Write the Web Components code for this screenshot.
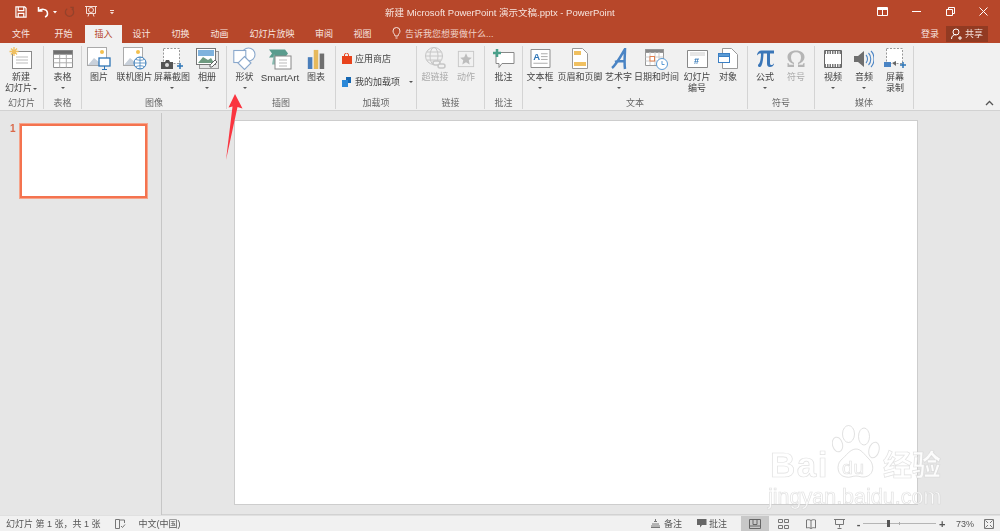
<!DOCTYPE html>
<html lang="zh">
<head>
<meta charset="utf-8">
<title>PowerPoint</title>
<style>
html, body { margin: 0; height: 100%; }
body {
    width: 1000px; height: 531px; overflow: hidden; position: relative;
    font: 9px "Noto Sans CJK SC", "Liberation Sans", sans-serif;
    display: flex; flex-direction: column;
    filter: blur(.3px);
}
</style>
</head>
<body>
<ppt-titlebar></ppt-titlebar>
<ppt-tabs></ppt-tabs>
<ppt-ribbon></ppt-ribbon>
<ppt-workspace></ppt-workspace>
<ppt-statusbar></ppt-statusbar>
<ppt-arrow></ppt-arrow>
<ppt-watermark></ppt-watermark>

<script>
const FONT = `"Liberation Sans", "Noto Sans CJK SC", sans-serif`;

customElements.define('ppt-titlebar', class extends HTMLElement {
    constructor() {
        super();
        this.attachShadow({mode: 'open'}).innerHTML = `
        <style>
        :host { display: flex; align-items: center; height: 25px; box-sizing: border-box; padding-bottom: 2px; background: #b7472a; color: #f6e4de; font: 9.5px ${FONT}; flex: none; position: relative; }
        .qat { display: flex; align-items: center; padding-left: 15px; gap: 0; width: 385px; box-sizing: border-box; }
        .title { width: 229px; white-space: nowrap; text-align: center; }
        .win { margin-left: auto; display: flex; align-items: center; }
        svg { display: block; }
        </style>
        <div class="qat">
            <svg width="12" height="12" viewBox="0 0 13 13" fill="none" stroke="#fff" stroke-width="1.300"><path d="M1 1h9.500L12 2.500V12H1zM3.500 1v4h6V1M3.500 12V8h6v4"/></svg>
            <svg style="margin-left:10px" width="12" height="12" viewBox="0 0 12 12" fill="none" stroke="#fff" stroke-width="1.500"><path d="M1.500 1v4h4M1.800 5C4 2.500 10 2.500 10.500 7c.2 2-1 3.500-2.500 4"/></svg>
            <svg style="margin-left:3px" width="6" height="4" viewBox="0 0 6 4" fill="#fff"><path d="M1 1h4L3 3.500z"/></svg>
            <svg style="margin-left:6px" width="11" height="12" viewBox="0 0 12 12" fill="none" stroke="#94422b" stroke-width="1.400"><path d="M3.500 2.500a4.500 4.500 0 1 0 5 0M7 1h3v3"/></svg>
            <svg style="margin-left:9px" width="14" height="13" viewBox="0 0 14 13" fill="none" stroke="#f4ddd6" stroke-width="1"><path d="M1 1.500h12M2.500 1.500v7h9v-7M5 8.500l-1 3M9 8.500l1 3"/><circle cx="7" cy="5" r="2.500"/></svg>
            <svg style="margin-left:11px" width="6" height="6" viewBox="0 0 6 6" fill="#f4ddd6"><path d="M1 1h4v1H1zM1 3h4L3 5.300z"/></svg>
        </div>
        <div class="title">新建 Microsoft PowerPoint 演示文稿.pptx - PowerPoint</div>
        <div class="win">
            <svg style="margin-right:24px" width="11" height="9" viewBox="0 0 11 9" fill="none" stroke="#fff"><path d="M.5.500h10v8H.5z"/><path d="M1 1h9v2H1z" fill="#fff" stroke="none"/><path d="M5.500 3v5"/></svg>
            <svg style="margin-right:25px" width="9" height="9" viewBox="0 0 9 9" fill="none" stroke="#fff"><path d="M0 4.500h9"/></svg>
            <svg style="margin-right:24px" width="9" height="9" viewBox="0 0 9 9" fill="none" stroke="#fff"><path d="M.5 2.500h6v6h-6zM2.500 2.500v-2h6v6h-2"/></svg>
            <svg style="margin-right:12px" width="9" height="9" viewBox="0 0 9 9" fill="none" stroke="#fff"><path d="M.5.500l8 8M8.500.500l-8 8"/></svg>
        </div>`;
    }
});

customElements.define('ppt-tabs', class extends HTMLElement {
    constructor() {
        super();
        const tabs = [['文件',42,0],['开始',43,0],['插入',37,1],['设计',39,0],['切换',39,0],['动画',39,0],['幻灯片放映',66,0],['审阅',38,0],['视图',39,0]];
        this.attachShadow({mode: 'open'}).innerHTML = `
        <style>
        :host { display: flex; height: 18px; background: #b7472a; color: #f8e6e0; font: 9px ${FONT}; flex: none; }
        .t { display: flex; align-items: center; justify-content: center; flex: none; box-sizing: border-box; padding-bottom: 2px; }
        .t.on { background: #f1f1f1; color: #b7472a; }
        .tell { display: flex; align-items: center; gap: 4px; margin-left: 10px; padding-bottom: 2px; color: #f0d2c8; }
        .right { margin-left: auto; display: flex; align-items: center; }
        .share { background: #923a22; width: 42px; height: 16px; margin: 0 12px 1px 7px; display: flex; align-items: center; justify-content: center; gap: 3px; color: #f6e4de; }
        .login { margin-bottom: 1px; }
        </style>
        ${tabs.map(([t, w, on]) => `<div class="t ${on ? 'on' : ''}" style="width:${w}px">${t}</div>`).join('')}
        <div class="tell">
            <svg width="9" height="12" viewBox="0 0 9 12" fill="none" stroke="#f6e4de"><path d="M3 9C3 7 1 6.500 1 4a3.500 3.500 0 0 1 7 0C8 6.500 6 7 6 9zM3.500 11h2"/></svg>
            <span>告诉我您想要做什么...</span>
        </div>
        <div class="right">
            <span class="login">登录</span>
            <div class="share">
                <svg width="11" height="12" viewBox="0 0 11 12" fill="none" stroke="#fff"><circle cx="5" cy="4" r="3"/><path d="M.5 11c0-3 2-4.500 4.500-4.500M7 10h4M9 8v4"/></svg>
                <span>共享</span>
            </div>
        </div>`;
    }
});

// one big ribbon button: icon on top, label under it, optional dropdown caret
customElements.define('rb-btn', class extends HTMLElement {
    constructor() {
        super();
        this.attachShadow({mode: 'open'}).innerHTML = `
        <style>
        :host { display: flex; flex-direction: column; align-items: center; flex: none; color: #444; font-size: 9px; line-height: 11px; white-space: nowrap; }
        :host([dim]) { color: #aaa; }
        .ic { height: 23px; margin-top: 1px; margin-bottom: 2px; display: flex; align-items: center; justify-content: center; }
        .caret { width: 0; height: 0; border: 2px solid transparent; border-top: 2.500px solid #555; border-bottom: 0; margin-top: 4px; }
        .lb { text-align: center; }
        </style>
        <div class="ic"><slot name="icon"></slot></div>
        <div class="lb"><slot></slot></div>
        <div class="caret"></div>`;
    }
    connectedCallback() {
        this.style.width = this.getAttribute('w') + 'px';
        if (!this.hasAttribute('caret'))
            this.shadowRoot.querySelector('.caret').style.display = 'none';
    }
});

// ribbon group: buttons on top, caption at the bottom, separator on the right
customElements.define('rb-group', class extends HTMLElement {
    constructor() {
        super();
        this.attachShadow({mode: 'open'}).innerHTML = `
        <style>
        :host { display: flex; flex-direction: column; flex: none; box-sizing: border-box; height: 63px; border-right: 1px solid #d4d4d4; color: #666; font-size: 9px; }
        .items { flex: 1; display: flex; min-height: 0; }
        .cap { height: 11px; line-height: 11px; text-align: center; }
        </style>
        <div class="items"><slot></slot></div>
        <div class="cap"></div>`;
    }
    connectedCallback() {
        this.shadowRoot.querySelector('.cap').textContent = this.getAttribute('label');
        this.style.width = this.getAttribute('w') + 'px';
    }
});

customElements.define('ppt-ribbon', class extends HTMLElement {
    constructor() {
        super();
        this.attachShadow({mode: 'open'}).innerHTML = `
        <style>
        :host { display: flex; height: 68px; box-sizing: border-box; padding-top: 3px; background: #f1f1f1; border-bottom: 1px solid #d2d2d2; flex: none; font-family: ${FONT}; position: relative; }
        svg { display: block; }
        .col { display: flex; flex-direction: column; gap: 11px; padding: 7px 0 0 5px; color: #444; line-height: 12px; font-size: 9px; }
        .row { display: flex; align-items: center; gap: 2px; white-space: nowrap; }
        .mini { width: 0; height: 0; border: 2px solid transparent; border-top: 2.500px solid #555; border-bottom: 0; margin-left: 7px; }
        .inl { display: inline-block; width: 0; height: 0; border: 2px solid transparent; border-top: 2.500px solid #555; border-bottom: 0; vertical-align: 1px; margin-left: 1px; }
        .up { position: absolute; right: 6px; bottom: 4px; }
        .sa { font-size: 9.800px; }
        </style>
        <rb-group w="44" label="幻灯片">
            <rb-btn w="42">
                <svg slot="icon" width="24" height="23" viewBox="0 0 24 23" fill="none"><rect x="3.500" y="4.500" width="19" height="17" fill="#fff" stroke="#8a8a8a"/><path d="M7 10h12M7 13h12M7 16h12" stroke="#bbb"/><path d="M5 0v9M.5 4.500h9M2 1.500l6 6M8 1.500l-6 6" stroke="#f0c060" stroke-width="1.300"/></svg>
                新建<br>幻灯片<i class="inl"></i>
            </rb-btn>
        </rb-group>
        <rb-group w="38" label="表格">
            <rb-btn w="37" caret>
                <svg slot="icon" width="20" height="18" viewBox="0 0 21 19" fill="#fff" stroke="#888"><path d="M.5.500h20v18H.5z"/><path d="M.5.500h20v4H.5z" fill="#6d6d6d"/><path d="M.5 9h20M.5 13.500h20M7 4.500v14M14 4.500v14" stroke="#aaa"/></svg>
                表格
            </rb-btn>
        </rb-group>
        <rb-group w="145" label="图像">
            <rb-btn w="34">
                <svg slot="icon" width="24" height="23" viewBox="0 0 24 23" fill="none"><rect x=".5" y=".5" width="19" height="18" fill="#fff" stroke="#aaa"/><path d="M1 18l6-7 5 4 3-2 4 5z" fill="#c8d0da"/><circle cx="15" cy="5" r="2" fill="#f3c04e"/><rect x="12" y="11" width="11" height="8" fill="#fff" stroke="#2e75b6" stroke-width="1.300"/><path d="M17.500 19v3M15 22.500h5" stroke="#2e75b6"/></svg>
                图片
            </rb-btn>
            <rb-btn w="37">
                <svg slot="icon" width="24" height="23" viewBox="0 0 24 23" fill="none"><rect x=".5" y=".5" width="19" height="18" fill="#fff" stroke="#aaa"/><path d="M1 18l6-7 5 4 3-2 4 5z" fill="#c8d0da"/><circle cx="15" cy="5" r="2" fill="#f3c04e"/><circle cx="17" cy="16" r="6" fill="#fff" stroke="#2e75b6"/><path d="M11 16h12M17 10v12M13 12.500c3 1 6 1 8 0M13 19.500c3-1 6-1 8 0" stroke="#2e75b6" stroke-width=".7"/></svg>
                联机图片
            </rb-btn>
            <rb-btn w="38" caret>
                <svg slot="icon" width="24" height="22" viewBox="0 0 24 22" fill="none"><rect x="3.500" y=".5" width="16" height="15" fill="#fff" stroke="#999" stroke-dasharray="2 1.500"/><path d="M1 14h4l1-2h3l1 2h3v7H1z" fill="#555"/><circle cx="7" cy="17" r="2" fill="#ddd"/><path d="M17 18h6M20 15v6" stroke="#2e75b6" stroke-width="1.500"/></svg>
                屏幕截图
            </rb-btn>
            <rb-btn w="32" caret>
                <svg slot="icon" width="23" height="21" viewBox="0 0 23 21" fill="none"><rect x="3.500" y="3.500" width="19" height="17" fill="#e6e6e6" stroke="#999"/><rect x=".5" y=".5" width="19" height="16" fill="#fff" stroke="#777"/><rect x="2" y="2" width="16" height="6" fill="#7fb2dd"/><path d="M2 15l5-6 5 3 3-2 3 5z" fill="#6f9a80"/><path d="M14 17l5-5 2 2-5 5h-2z" fill="#fff" stroke="#666"/></svg>
                相册
            </rb-btn>
        </rb-group>
        <rb-group w="109" label="插图">
            <rb-btn w="35" caret>
                <svg slot="icon" width="23" height="23" viewBox="0 0 23 23" fill="#fff" stroke="#8aa8cc" stroke-width="1.100"><circle cx="15.500" cy="7.500" r="6.500"/><rect x=".8" y="3.500" width="12" height="12" fill="#fff"/><path d="M11.500 9.500l6.500 6.500-6.500 6.500-6.500-6.500z"/></svg>
                形状
            </rb-btn>
            <rb-btn w="36">
                <svg slot="icon" width="24" height="22" viewBox="0 0 24 22" fill="none"><path d="M1 .5h16l3 4-3 4H1l3-4z" fill="#5a9c8e" transform="translate(0 1)"/><path d="M6 5.500l-2 11h5" fill="#8abcb2"/><rect x="7" y="8" width="16" height="13" fill="#fff" stroke="#888"/><path d="M11 12h8M11 15h8M11 18h8" stroke="#bbb"/></svg>
                <span class="sa">SmartArt</span>
            </rb-btn>
            <rb-btn w="36">
                <svg slot="icon" width="18" height="20" viewBox="0 0 18 22"><rect x="0" y="9" width="5" height="13" fill="#4a7ebb"/><rect x="6.500" y="1" width="5" height="21" fill="#e6b95c"/><rect x="13" y="5" width="5" height="17" fill="#6f6f6f"/></svg>
                图表
            </rb-btn>
        </rb-group>
        <rb-group w="81" label="加载项">
            <div class="col">
                <div class="row">
                    <svg width="12" height="12" viewBox="0 0 12 12"><path d="M1 3h10v8H1z" fill="#e8431c"/><path d="M3.500 4V2a2 2 0 0 1 4 0v2" fill="none" stroke="#e8431c"/></svg>
                    <span>应用商店</span>
                </div>
                <div class="row">
                    <svg width="12" height="12" viewBox="0 0 12 12" fill="#1667b2"><path d="M5 1h5v6H5z"/><path d="M1 4h6v7H1z" fill="#2b88d8"/></svg>
                    <span>我的加载项</span><i class="mini"></i>
                </div>
            </div>
        </rb-group>
        <rb-group w="68" label="链接">
            <rb-btn w="36" dim>
                <svg slot="icon" width="22" height="23" viewBox="0 0 22 23" fill="none" stroke="#c6c6c6"><circle cx="10" cy="9" r="8.500"/><ellipse cx="10" cy="9" rx="4" ry="8.500"/><path d="M1.500 9h17M2.500 5h15M2.500 13h15"/><rect x="9" y="14" width="7" height="4" rx="2" stroke-width="1.500" fill="#f1f1f1"/><rect x="14" y="17" width="7" height="4" rx="2" stroke-width="1.500" fill="#f1f1f1"/></svg>
                超链接
            </rb-btn>
            <rb-btn w="26" dim>
                <svg slot="icon" width="20" height="18" viewBox="0 0 20 20" fill="none"><rect x="1.500" y="1.500" width="17" height="17" stroke="#c6c6c6"/><path d="M10 3.500l2 4.500 4.500.5-3.400 3 1 4.500L10 13.500 5.900 16l1-4.500-3.400-3L8 8z" fill="#bdbdbd"/></svg>
                动作
            </rb-btn>
        </rb-group>
        <rb-group w="38" label="批注">
            <rb-btn w="37">
                <svg slot="icon" width="23" height="22" viewBox="0 0 23 20" fill="none"><path d="M4 3.500h18v11H10l-3 4v-4H4z" fill="#fff" stroke="#888"/><path d="M1 4h8M5 0v8" stroke="#4aa08a" stroke-width="2.500"/></svg>
                批注
            </rb-btn>
        </rb-group>
        <rb-group w="225" label="文本">
            <rb-btn w="34" caret>
                <svg slot="icon" width="21" height="19" viewBox="0 0 21 20" fill="#fff" stroke="#888"><path d="M.5.500h20v19H.5z"/><text x="3" y="12" font-size="10" font-weight="700" fill="#2e75b6" stroke="none" font-family="Liberation Sans">A</text><path d="M11 5h7M11 8h7M11 11h7M3 15h15" stroke="#aaa"/></svg>
                文本框
            </rb-btn>
            <rb-btn w="46">
                <svg slot="icon" width="16" height="21" viewBox="0 0 16 21" fill="#fff" stroke="#999"><path d="M.5.500h10l5 5v15H.5z"/><rect x="2" y="3" width="7" height="4" fill="#f0c060" stroke="none"/><rect x="2" y="14" width="12" height="4" fill="#f0c060" stroke="none"/></svg>
                页眉和页脚
            </rb-btn>
            <rb-btn w="31" caret>
                <svg slot="icon" width="16" height="22" viewBox="0 0 16 22" fill="none"><path d="M1 20C5 17 10 8 14 1c0 6-1 13 0 20M4 14c3-1 7-1 10-1" stroke="#4a84c4" stroke-width="2.500"/></svg>
                艺术字
            </rb-btn>
            <rb-btn w="45">
                <svg slot="icon" width="23" height="23" viewBox="0 0 23 23" fill="#fff" stroke="#999"><path d="M.5 2.500h18v16H.5z"/><path d="M.5 2.500h18v3H.5z" fill="#888"/><path d="M.5 10h18M.5 14h18M5 5v13M10 5v13M14 5v13" stroke="#ccc"/><rect x="5" y="9.500" width="4.500" height="4.500" stroke="#e08050"/><circle cx="17" cy="17" r="5.500" stroke="#5b9bd5"/><path d="M17 14v3.500h2.500" stroke="#5b9bd5"/></svg>
                日期和时间
            </rb-btn>
            <rb-btn w="36">
                <svg slot="icon" width="21" height="18" viewBox="0 0 21 18" fill="#fff" stroke="#888"><path d="M.5.500h20v17H.5z"/><path d="M3 3h15M3 5h15" stroke="#ccc"/><text x="7" y="14" font-size="9" font-weight="700" fill="#2e75b6" stroke="none" font-family="Liberation Sans">#</text></svg>
                幻灯片<br>编号
            </rb-btn>
            <rb-btn w="26">
                <svg slot="icon" width="20" height="21" viewBox="0 0 20 21" fill="#fff" stroke="#999"><path d="M4.500.500h9l6 6v14h-15z"/><rect x=".5" y="5.500" width="11" height="9" stroke="#3b7fc4"/><path d="M.5 5.500h11v3H.5z" fill="#5b9bd5" stroke="#3b7fc4"/></svg>
                对象
            </rb-btn>
        </rb-group>
        <rb-group w="67" label="符号">
            <rb-btn w="34" caret>
                <svg slot="icon" width="18" height="17" viewBox="0 0 18 17" fill="#3a76b8"><path d="M1 5C1.500 2 3 .5 5.500 .5H18v3h-4V13c0 1.500.5 2 1.500 2s1.500-.5 2-1.500l.5.500c-.5 2-2 3-4 3-2.200 0-3-1.200-3-3.500v-10H7.500C7.300 8 6.800 13 5.500 15.500 5 16.500 4.200 17 3.500 17 2.500 17 2 16.400 2 15.500c0-1 .8-1.500 1.500-2.500C4.500 11 5 7 5 3.500h-.5C3 3.500 2 4 1.500 5.200z"/></svg>
                公式
            </rb-btn>
            <rb-btn w="28" dim>
                <svg slot="icon" width="18" height="17" viewBox="0 0 18 17" fill="#b5b5b5"><path d="M.5 17v-4h1c.2 1.300.7 1.800 2 1.800h3V14C3.500 13 .5 10.500 .5 7c0-4 3.500-6.500 8.500-6.500S17.500 3 17.500 7c0 3.500-3 6-6 7v.8h3c1.300 0 1.800-.5 2-1.800h1v4H11v-4.300c2-.9 3-2.900 3-5.500C14 4 12 2.200 9 2.200S4 4 4 7.200c0 2.600 1 4.600 3 5.500V17z"/></svg>
                符号
            </rb-btn>
        </rb-group>
        <rb-group w="99" label="媒体">
            <rb-btn w="36" caret>
                <svg slot="icon" width="18" height="18" viewBox="0 0 18 18" fill="#fff" stroke="#666"><path d="M.5.500h17v17H.5z"/><path d="M.5 2.500h17M.5 15.500h17" stroke-width="3" stroke="#777" stroke-dasharray="1.500 1"/></svg>
                视频
            </rb-btn>
            <rb-btn w="26" caret>
                <svg slot="icon" width="20" height="20" viewBox="0 0 20 20" fill="none"><path d="M0 7h4l6-5v16l-6-5H0z" fill="#6f6f6f"/><path d="M12 6c2 2 2 6 0 8M14.500 4c3 3 3 9 0 12M17 2c4 4 4 12 0 16" stroke="#4a84c4" stroke-width="1.100"/></svg>
                音频
            </rb-btn>
            <rb-btn w="36">
                <svg slot="icon" width="22" height="21" viewBox="0 0 22 21" fill="none"><rect x="2.500" y=".5" width="16" height="15" fill="#fff" stroke="#999" stroke-dasharray="2 1.500"/><path d="M0 14h7v5H0z" fill="#4a84c4"/><path d="M8 15l4-2v5z" fill="#666"/><path d="M16 17h6M19 14v6" stroke="#2e75b6" stroke-width="1.500"/></svg>
                屏幕<br>录制
            </rb-btn>
        </rb-group>
        <svg class="up" width="9" height="6" viewBox="0 0 9 6" fill="none" stroke="#555" stroke-width="1.300"><path d="M1 5l3.500-3.500L8 5"/></svg>`;
    }
});

customElements.define('ppt-workspace', class extends HTMLElement {
    constructor() {
        super();
        this.attachShadow({mode: 'open'}).innerHTML = `
        <style>
        :host { display: flex; flex: 1; min-height: 0; background: #e6e6e6; font-family: ${FONT}; }
        .thumbs { width: 162px; flex: none; box-sizing: border-box; border-right: 1px solid #c6c6c6; margin-top: 2px; display: flex; align-items: flex-start; padding: 11px 0 0 10px; gap: 4px; color: #d9694a; font-size: 10px; font-weight: 700; line-height: 10px; }
        .thumb { width: 123px; height: 70px; background: #fff; border: 2px solid #f4734f; outline: 1px solid #f6a48b; outline-offset: -.5px; }
        .edit { flex: 1; padding: 9px 0 0 72px; box-sizing: border-box; border-bottom: 1px solid #d2d2d2; }
        .slide { width: 684px; height: 385px; background: #fff; border: 1px solid #cdcdcd; box-sizing: border-box; }
        </style>
        <div class="thumbs"><span>1</span><div class="thumb"></div></div>
        <div class="edit"><div class="slide"></div></div>`;
    }
});

customElements.define('ppt-statusbar', class extends HTMLElement {
    constructor() {
        super();
        this.attachShadow({mode: 'open'}).innerHTML = `
        <style>
        :host { display: flex; align-items: center; height: 16px; box-sizing: border-box; border-top: 1px solid #e0e0e0; background: #f1f1f1; color: #555; font: 9px ${FONT}; flex: none; padding-left: 6px; white-space: nowrap; }
        svg { display: block; flex: none; }
        .right { margin-left: auto; display: flex; align-items: center; height: 100%; }
        .v { width: 28px; height: 100%; display: flex; align-items: center; justify-content: center; flex: none; }
        .v.on { background: #c8c8c8; }
        .zoom { width: 73px; height: 1px; background: #b5b5b5; position: relative; margin: 0 3px 0 2px; flex: none; }
        .thumb { position: absolute; left: 24px; top: -3px; width: 3px; height: 7px; background: #555; }
        .tick { position: absolute; left: 36px; top: -1px; width: 1px; height: 3px; background: #aaa; }
        .pm { width: 5px; text-align: center; font: 700 11px/10px ${FONT}; flex: none; }
        </style>
        <span>幻灯片 第 1 张，共 1 张</span>
        <svg style="margin-left:14px" width="11" height="10" viewBox="0 0 11 10" fill="none" stroke="#777"><path d="M.5.500h4v9h-4zM4.500 1h5v3M6 7l1.500 1.500L10 5.500"/></svg>
        <span style="margin-left:13px">中文(中国)</span>
        <div class="right">
            <svg width="9" height="9" viewBox="0 0 9 9" fill="none" stroke="#777"><path d="M3 2.500h3M1 5h7M0 7h9M0 8.500h9M4.500 0v2"/></svg>
            <span style="margin:0 15px 0 4px">备注</span>
            <svg width="10" height="9" viewBox="0 0 10 9" fill="#666"><path d="M0 0h9.500v6H5L3 8.500V6H0z"/></svg>
            <span style="margin:0 14px 0 2px">批注</span>
            <div class="v on"><svg width="12" height="10" viewBox="0 0 12 10" fill="none" stroke="#666"><path d="M.5.500h11v9H.5zM4 .5v5h4v-5M.5 7h11"/></svg></div>
            <div class="v"><svg width="11" height="10" viewBox="0 0 11 10" fill="none" stroke="#777"><path d="M.5.500h4v3h-4zM6.500.500h4v3h-4zM.5 6.500h4v3h-4zM6.500 6.500h4v3h-4z"/></svg></div>
            <div class="v"><svg width="10" height="10" viewBox="0 0 10 10" fill="none" stroke="#777"><path d="M5 1.500C3.500.5 2 .5.500 1v8c1.500-.5 3-.5 4.500.5 1.500-1 3-1 4.500-.5V1C8 .5 6.500.5 5 1.500zM5 1.500v8"/></svg></div>
            <div class="v"><svg width="11" height="10" viewBox="0 0 11 10" fill="none" stroke="#777"><path d="M0 .5h11M1.500.5v5h8v-5M5.500 5.500v3M3.500 9.500h4"/></svg></div>
            <span class="pm" style="margin-left:3px">-</span>
            <div class="zoom"><i class="thumb"></i><i class="tick"></i></div>
            <span class="pm" style="width:6px">+</span>
            <span style="margin-left:11px;width:22px">73%</span>
            <svg style="margin:0 6px" width="10" height="10" viewBox="0 0 10 10" fill="none" stroke="#777"><path d="M.5.500h9v9h-9z"/><path d="M1.500 1.500l2.500 2.500M8.500 1.500L6 4M1.500 8.500L4 6M8.500 8.500L6 6"/></svg>
        </div>`;
    }
});

// the red annotation arrow drawn on top of the screenshot
customElements.define('ppt-arrow', class extends HTMLElement {
    constructor() {
        super();
        this.attachShadow({mode: 'open'}).innerHTML = `
        <style>
        :host { position: absolute; left: 224px; top: 94px; width: 20px; height: 68px; }
        svg { display: block; }
        </style>
        <svg width="20" height="68" viewBox="0 0 20 68"><path d="M11 0L18.500 14.500 13.500 13 2 66 8.500 12.500 4.500 13.500z" fill="#fa3540"/></svg>`;
    }
});

customElements.define('ppt-watermark', class extends HTMLElement {
    constructor() {
        super();
        this.attachShadow({mode: 'open'}).innerHTML = `
        <style>
        :host { position: absolute; left: 765px; top: 424px; width: 185px; height: 88px; pointer-events: none; font-family: "Liberation Sans", "Noto Sans CJK SC", sans-serif; }
        svg { position: absolute; left: 67px; top: 1px; }
        span { position: absolute; white-space: nowrap; -webkit-text-stroke: .7px rgba(205,205,205,.6); color: rgba(255,255,255,.85); }
        .b { left: 5px; top: 23px; font-size: 35px; line-height: 36px; font-weight: 700; letter-spacing: 1.500px; }
        .du { left: 77px; top: 33px; font-size: 19px; line-height: 22px; letter-spacing: 1px; }
        .jy { left: 118px; top: 26px; font-size: 29px; line-height: 32px; font-weight: 700; }
        .url { left: 3px; top: 60px; font-size: 21.500px; line-height: 26px; }
        </style>
        <svg width="48" height="53" viewBox="0 0 48 53" fill="rgba(255,255,255,.65)" stroke="rgba(205,205,205,.6)" stroke-width="1">
            <ellipse cx="5.500" cy="19.500" rx="5" ry="7.500" transform="rotate(-15 5.500 19.500)"/>
            <ellipse cx="16.500" cy="9" rx="6" ry="8.500"/>
            <ellipse cx="32" cy="11.500" rx="5.500" ry="8.500"/>
            <ellipse cx="42" cy="25" rx="5" ry="8" transform="rotate(15 42 25)"/>
            <path d="M24 24c5 0 8 5 13 10 6 6 5 17-5 18-3 .3-5-1-8-1-4 0-6 2-10 1-9-1-10-12-5-17 5-4 9-11 15-11z"/>
        </svg>
        <span class="b">Bai</span>
        <span class="du">du</span>
        <span class="jy">经验</span>
        <span class="url">jingyan.baidu.com</span>`;
    }
});
</script>
</body>
</html>
